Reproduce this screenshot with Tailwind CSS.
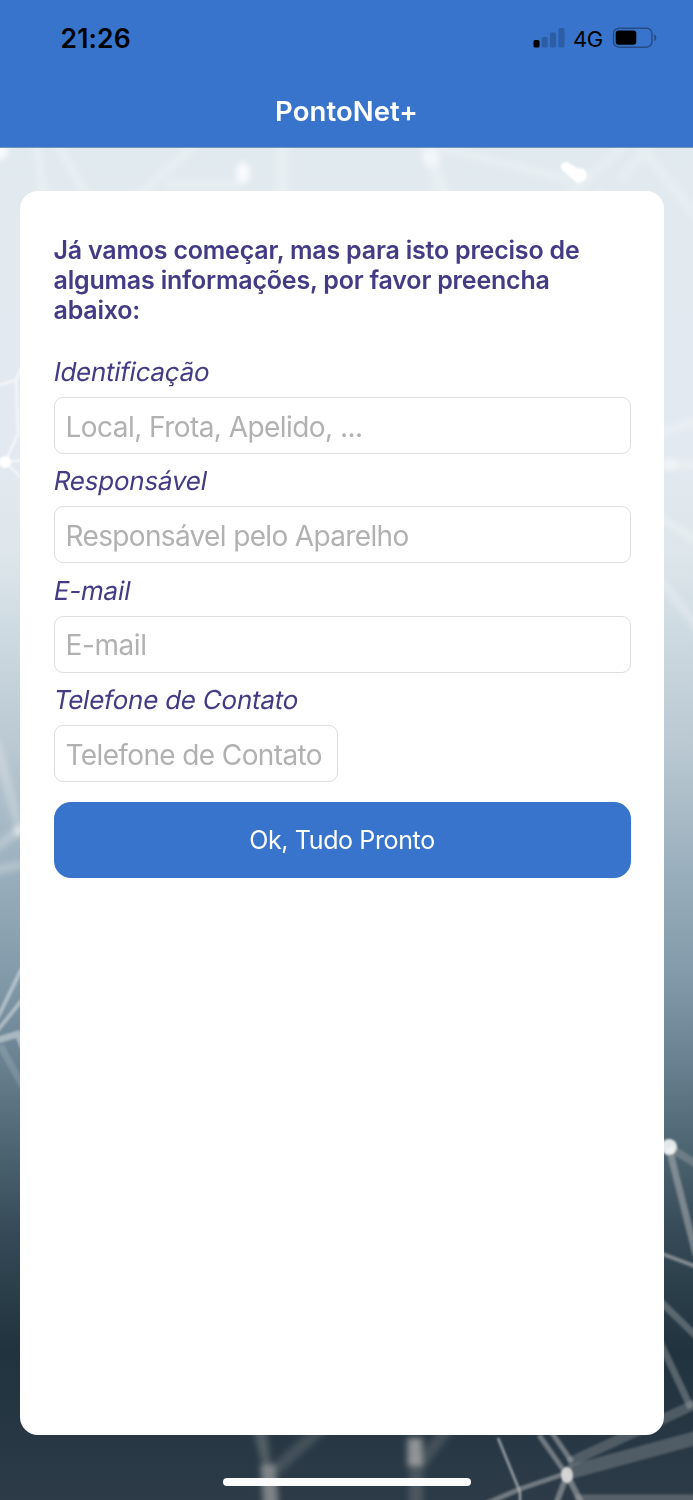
<!DOCTYPE html>
<html lang="pt-BR">
<head>
<meta charset="utf-8">
<title>PontoNet+</title>
<script src="https://cdn.jsdelivr.net/npm/@tailwindcss/browser@4"></script>
</head>
<body class="relative h-[1500px] w-[693px] overflow-hidden bg-[#223440] font-['Inter','Liberation_Sans',sans-serif]">
<svg class="absolute inset-0 -z-0" width="693" height="1500" viewBox="0 0 693 1500" aria-hidden="true">
  <defs>
    <linearGradient id="sky" x1="0" y1="0" x2="0" y2="1500" gradientUnits="userSpaceOnUse">
      <stop offset=".1" stop-color="#e1eaef"/><stop offset=".3" stop-color="#e3e9f0"/><stop offset=".37" stop-color="#dde6ea"/>
      <stop offset=".43" stop-color="#cbd8e0"/><stop offset=".5" stop-color="#b9c8d1"/><stop offset=".58" stop-color="#9aafbd"/><stop offset=".65" stop-color="#829aaa"/>
      <stop offset=".71" stop-color="#68808f"/><stop offset=".77" stop-color="#4b626f"/><stop offset=".82" stop-color="#364b57"/>
      <stop offset=".9" stop-color="#20333f"/><stop offset="1" stop-color="#2c3b47"/>
    </linearGradient>
    <filter id="b1" x="0" y="0" width="693" height="1500" filterUnits="userSpaceOnUse"><feGaussianBlur stdDeviation="1"/></filter>
    <filter id="b3" x="0" y="0" width="693" height="1500" filterUnits="userSpaceOnUse"><feGaussianBlur stdDeviation="3"/></filter>
  </defs>
  <rect width="693" height="1500" fill="url(#sky)"/>
  <g stroke="#fff" fill="none" filter="url(#b3)" stroke-opacity=".3">
    <path d="M34 130L47 220M50 130L97 215" stroke-width="7"/>
    <path d="M205 135L115 218M165 184H240" stroke-width="8" stroke-opacity=".25"/>
    <path d="M282 130V210M425 140L450 215" stroke-width="13" stroke-opacity=".25"/>
    <path d="M430 145L570 180M575 190L630 140M580 182L555 215M600 190V215" stroke-width="7" stroke-opacity=".25"/>
    <path d="M635 140L720 245M655 140L620 180" stroke-width="10" stroke-opacity=".2"/>
    <path d="M640 438L720 415M640 465H720M640 505L720 555M640 555L720 655" stroke-width="7" stroke-opacity=".3"/>
    <path d="M-5 740L20 830M-10 852L22 828M-10 872L22 864" stroke-width="9" stroke-opacity=".25"/>
  </g>
  <g fill="#fff" filter="url(#b3)">
    <ellipse cx="243" cy="173" rx="7" ry="11" opacity=".8"/>
    <circle cx="431" cy="158" r="9" opacity=".5"/>
    <circle cx="0" cy="152" r="8" opacity=".8"/>
    <circle cx="19" cy="831" r="5" opacity=".6"/>
    <circle cx="670" cy="464" r="7" opacity=".4"/>
  </g>
  <g fill="#fff" filter="url(#b1)"><circle cx="566" cy="167" r="5"/><path d="M563 171L571 164L586 174L578 184Z"/><circle cx="580" cy="175" r="7"/><circle cx="5" cy="462" r="6"/></g>
  <g stroke="#fff" fill="none" filter="url(#b1)" stroke-opacity=".55">
    <path d="M0 385L16 380L24 362M16 380L18 434L5 462L24 460M5 462L24 480" stroke-width="3"/>
    <path d="M-2 1017L22 968M-2 1030L22 1000" stroke-width="4" stroke-opacity=".4"/>
    <path d="M-2 1040L18 1034L24 1048" stroke-width="7" stroke-opacity=".4"/>
    <path d="M0 1045L25 1090" stroke-width="7" stroke-opacity=".14"/>
  </g>
  <g stroke="#b9b9bb" fill="none" filter="url(#b1)">
    <path d="M669 1148L696 1255" stroke-width="7" stroke-opacity=".5"/>
    <path d="M670 1148L700 1166" stroke-width="8" stroke-opacity=".3"/>
    <path d="M660 1253L697 1267" stroke-width="4" stroke-opacity=".6"/>
    <path d="M660 1301L697 1337M660 1342L691 1408" stroke-width="7" stroke-opacity=".35"/>
    <path d="M567 1473L700 1437" stroke-width="14" stroke-opacity=".28"/>
    <path d="M568 1463L700 1402" stroke-width="10" stroke-opacity=".28"/>
    <path d="M567 1475L539 1435M572 1462L550 1430" stroke-width="5" stroke-opacity=".5"/>
    <path d="M567 1473L520 1489L485 1504" stroke-width="5" stroke-opacity=".5"/>
    <path d="M498 1438L520 1492V1504" stroke-width="2.500" stroke-opacity=".8"/>
    <path d="M567 1475L556 1504M567 1475L582 1504" stroke-width="6" stroke-opacity=".5"/>
    <path d="M575 1498H700" stroke-width="7" stroke-opacity=".3"/>
  </g>
  <g filter="url(#b3)" stroke="#aaa" fill="none">
    <path d="M255 1425L267 1470M263 1425L268 1470" stroke-width="6" stroke-opacity=".35"/>
    <path d="M275 1470L325 1425M420 1465L450 1425" stroke-width="12" stroke-opacity=".22"/>
    <path d="M268 1465L272 1520" stroke-width="15" stroke-opacity=".65"/>
    <path d="M415 1438V1466" stroke-width="15" stroke-opacity=".8"/>
    <path d="M416 1460V1520" stroke-width="14" stroke-opacity=".25"/>
  </g>
  <g filter="url(#b1)"><circle cx="669" cy="1147" r="8" fill="#fff" opacity=".85"/><ellipse cx="567" cy="1475" rx="6" ry="8" fill="#ddd" opacity=".9"/></g>
</svg>
<div class="relative flex h-full flex-col">
  <header class="flex h-[148px] flex-none flex-col border-b border-[#6f93bd] bg-[#3874cc]">
    <div class="flex h-[74px] items-center pt-[2px] pr-[35.500px] pl-[60.500px]">
      <span class="pt-[2px] text-[26.500px] font-semibold tracking-[0.150px] text-black">21:26</span>
      <div class="ml-auto flex items-center">
        <svg width="32" height="22" viewBox="0 0 32 22"><rect x=".5" y="13" width="6" height="7.500" rx="1.500"/><g fill="#2d5da4"><rect x="8.700" y="10" width="6" height="10.500" rx="1.500"/><rect x="17" y="5.500" width="6" height="15" rx="1.500"/><rect x="25.500" y="1" width="6" height="19.500" rx="1.500"/></g></svg>
        <span class="ml-[8.500px] w-[30.500px] pt-[2px] text-[22px] tracking-[-0.5px] whitespace-nowrap text-black">4G</span>
        <svg class="ml-[8px]" width="46" height="22" viewBox="0 0 46 22"><rect x="1.500" y="1.200" width="38.500" height="19" rx="5.500" fill="none" stroke="#244b84" stroke-width="1.400"/><rect x="3.700" y="3.500" width="20.600" height="14.300" rx="3"/><path d="M42.300 7.300Q44.400 8.200 44.400 10.700T42.300 14.200Z" fill="#244b84"/></svg>
      </div>
    </div>
    <h1 class="pt-[1px] text-center text-[27.500px] leading-[72px] font-semibold tracking-[0.080px] text-white">PontoNet+</h1>
  </header>
  <main class="mt-[43px] ml-[20px] flex h-[1243.500px] w-[644px] flex-none flex-col rounded-[18px] bg-white px-[33.500px] pt-[44px]">
    <p class="text-[25px] leading-[30px] font-semibold tracking-[-0.200px] whitespace-nowrap text-[#443b85]">Já vamos começar, mas para isto preciso de<br>algumas informações, por favor preencha<br>abaixo:</p>
    <form class="mt-[20px] text-[#443b85]">
      <div class="h-[109.400px] pt-[12px]"><label class="block h-[40px] text-[26px] leading-[30px] tracking-[-0.270px]"><span class="inline-block -skew-x-[10deg]">Identificação</span></label><div class="flex h-[57px] items-center rounded-[9px] border border-[#dedede] bg-white px-[11px] pt-[2px] text-[28px] tracking-[-0.550px] text-[#b1b1b1]">Local, Frota, Apelido, ...</div></div>
      <div class="h-[109.400px] pt-[12px]"><label class="block h-[40px] text-[26px] leading-[30px] tracking-[-0.220px]"><span class="inline-block -skew-x-[10deg]">Responsável</span></label><div class="flex h-[57px] items-center rounded-[9px] border border-[#dedede] bg-white px-[11px] pt-[2px] text-[28px] tracking-[-0.650px] text-[#b1b1b1]">Responsável pelo Aparelho</div></div>
      <div class="h-[109.400px] pt-[12px]"><label class="block h-[40px] text-[26px] leading-[30px] tracking-[-0.150px]"><span class="inline-block -skew-x-[10deg]">E-mail</span></label><div class="flex h-[57px] items-center rounded-[9px] border border-[#dedede] bg-white px-[11px] pt-[2px] text-[28px] tracking-[-0.4px] text-[#b1b1b1]">E-mail</div></div>
      <div class="h-[109.400px] pt-[12px]"><label class="block h-[40px] text-[26px] leading-[30px] tracking-[-0.240px]"><span class="inline-block -skew-x-[10deg]">Telefone de Contato</span></label><div class="flex h-[57px] w-[284px] items-center rounded-[9px] border border-[#dedede] bg-white px-[11px] pt-[2px] text-[28px] tracking-[-0.620px] whitespace-nowrap text-[#b1b1b1]">Telefone de Contato</div></div>
      <button type="button" class="mt-[19px] block h-[76px] w-full rounded-[17px] bg-[#3874cc] pt-[3px] text-[25px] tracking-[-0.370px] text-white">Ok, Tudo Pronto</button>
    </form>
  </main>
  <div class="mx-auto mt-[43.500px] h-[8px] w-[248px] rounded-full bg-[#fcfcfc]"></div>
</div>
</body>
</html>
